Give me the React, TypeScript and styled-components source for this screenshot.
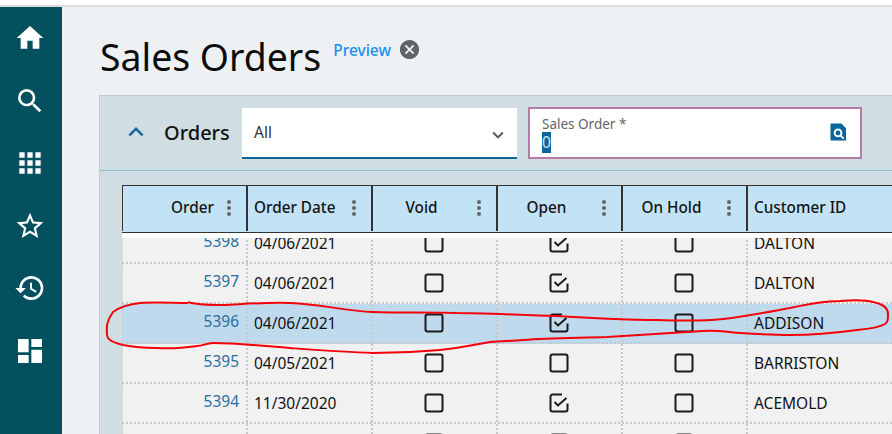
import React from 'react';
import styled, { createGlobalStyle } from 'styled-components';
import {
  MdApps,
  MdCancel,
  MdDashboard,
  MdExpandLess,
  MdExpandMore,
  MdHistory,
  MdHome,
  MdSearch,
  MdStarBorder,
} from 'react-icons/md';

const GlobalStyle = createGlobalStyle`
  html, body {
    margin: 0;
    height: 100%;
    overflow: hidden;
    background: #fff;
    font-family: "Noto Sans", "Open Sans", sans-serif;
    color: #111;
  }
`;

const Page = styled.div`
  position: relative;
  width: 892px;
  height: 434px;
  overflow: hidden;
  display: flex;
  flex-direction: column;
`;

const TopStrip = styled.div`
  height: 5px;
  flex: none;
  background: #fff;
  border-bottom: 2px solid #dcdde1;
`;

const Shell = styled.div`
  flex: 1;
  min-height: 0;
  display: flex;
`;

const Sidebar = styled.nav`
  width: 62px;
  flex: none;
  box-sizing: border-box;
  background: #03505f;
  display: flex;
  flex-direction: column;
  align-items: center;
  gap: 30.5px;
  padding: 15px 2px 0 0;
  color: #fff;

  svg {
    display: block;
  }
`;

const Main = styled.main`
  flex: 1;
  min-width: 0;
  background: #eef1f4;
  padding-left: 37px;
`;

const TitleRow = styled.div`
  height: 88px;
  display: flex;
  align-items: flex-start;
`;

const Title = styled.h1`
  margin: 25px 0 0 1px;
  font-size: 37.4px;
  line-height: 50px;
  font-weight: 400;
  color: #0c0c0c;
`;

const Preview = styled.a`
  margin: 31px 0 0 12px;
  font-size: 15.5px;
  line-height: 24px;
  font-weight: 500;
  color: #1b8eea;
`;

const CloseIcon = styled(MdCancel)`
  margin: 31px 0 0 7px;
  color: #5f6468;
`;

const Panel = styled.section`
  background: #d0dde2;
  border-top: 1px solid #c0ccd1;
  border-left: 1px solid #c0ccd1;
  height: 400px;
`;

const PanelHeader = styled.div`
  height: 75px;
  box-sizing: border-box;
  border-bottom: 1px solid #8fbfcc;
  display: flex;
  align-items: flex-start;
  padding: 12px 0 0 21px;
`;

const Collapse = styled(MdExpandLess)`
  margin-top: 9px;
  color: #17689a;
`;

const PanelTitle = styled.h2`
  margin: 11px 12px 0 13px;
  font-size: 20px;
  line-height: 28px;
  font-weight: 500;
  width: 66px;
  flex: none;
`;

const SelectBox = styled.div`
  width: 275px;
  height: 51px;
  flex: none;
  box-sizing: border-box;
  background: #fff;
  border-bottom: 2px solid #0b6a99;
  display: flex;
  align-items: center;
  justify-content: space-between;
  padding: 0 8px 1px 12px;
  font-size: 15.5px;
  color: #333;

  svg {
    color: #555;
    margin-top: 5px;
  }
`;

const OrderField = styled.div`
  width: 334px;
  height: 52px;
  margin: -1px 0 0 11px;
  flex: none;
  box-sizing: border-box;
  background: #fff;
  border: 2px solid #b57ba0;
  padding: 7px 13px 0 12px;
  display: flex;
  justify-content: space-between;
`;

const FieldText = styled.div`
  display: flex;
  flex-direction: column;
  align-items: flex-start;
`;

const FieldLabel = styled.label`
  font-size: 13.5px;
  line-height: 16px;
  color: #666;
`;

const FieldValue = styled.span`
  background: #0b669b;
  color: #cfe6f2;
  font-size: 15.5px;
  line-height: 21px;
`;

const LookupIcon = styled.svg`
  margin-top: 6px;
`;

const GridWrap = styled.div`
  padding: 14px 0 0 22px;
`;

const columns = '124px 125px 125px 125px 125px 1fr';

const HeaderRow = styled.div`
  display: grid;
  grid-template-columns: ${columns};
  height: 48px;
  box-sizing: border-box;
  background: #c2e3f6;
  border-top: 1px solid #333;
  border-bottom: 1px solid #333;
  margin-right: -4px;
`;

const HeaderCell = styled.div<{ $align: 'left' | 'center' | 'right' }>`
  position: relative;
  box-sizing: border-box;
  border-left: 2px solid #333;
  margin-bottom: 1px;
  display: flex;
  align-items: center;
  font-size: 15.3px;
  font-weight: 500;
  color: #141414;
  padding: 0 32px 4px 6px;
  justify-content: ${(p) =>
    p.$align === 'left' ? 'flex-start' : p.$align === 'center' ? 'center' : 'flex-end'};

  &:first-child {
    border-left-width: 1px;
  }
`;

const Kebab = styled.i`
  position: absolute;
  right: 15px;
  top: 14px;
  display: flex;
  flex-direction: column;
  gap: 2px;

  b {
    width: 4px;
    height: 4px;
    border-radius: 50%;
    background: #666;
  }
`;

const Spacer = styled.div`
  height: 5px;
  background: #fff;
`;

const Body = styled.div`
  height: 240px;
  overflow: hidden;
`;

const Row = styled.div<{ $selected?: boolean; $first?: boolean }>`
  display: grid;
  grid-template-columns: ${columns};
  height: 40px;
  box-sizing: border-box;
  margin-top: ${(p) => (p.$first ? '-14px' : '0')};
  background: ${(p) => (p.$selected ? '#c0daed' : '#f1f1f1')};
  border-bottom: 2px dotted #c8c8c8;
`;

const Cell = styled.div`
  box-sizing: border-box;
  border-left: 2px dotted #c8c8c8;
  display: flex;
  align-items: center;
  font-size: 15.5px;
  padding: 0 6px 1px;
  color: #111;

  &:first-child {
    border-left-width: 1px;
  }
`;

const OrderCell = styled(Cell)`
  justify-content: flex-end;
  padding: 0 7px 5px 0;
  color: #2a6f9f;
`;

const BoxCell = styled(Cell)`
  justify-content: center;
  padding: 0 2px 1px 0;
`;

const Box = styled.svg`
  display: block;
`;

const Scribble = styled.svg`
  position: absolute;
  left: 0;
  top: 0;
  pointer-events: none;
`;

type Order = { id: string; date: string; voided: boolean; open: boolean; hold: boolean; customer: string };

const orders: Order[] = [
  { id: '5398', date: '04/06/2021', voided: false, open: true, hold: false, customer: 'DALTON' },
  { id: '5397', date: '04/06/2021', voided: false, open: true, hold: false, customer: 'DALTON' },
  { id: '5396', date: '04/06/2021', voided: false, open: true, hold: false, customer: 'ADDISON' },
  { id: '5395', date: '04/05/2021', voided: false, open: false, hold: false, customer: 'BARRISTON' },
  { id: '5394', date: '11/30/2020', voided: false, open: true, hold: false, customer: 'ACEMOLD' },
  { id: '', date: '', voided: false, open: false, hold: false, customer: '' },
];

const headers: { label: string; align: 'left' | 'center' | 'right'; menu: boolean }[] = [
  { label: 'Order', align: 'right', menu: true },
  { label: 'Order Date', align: 'left', menu: true },
  { label: 'Void', align: 'center', menu: true },
  { label: 'Open', align: 'center', menu: true },
  { label: 'On Hold', align: 'center', menu: true },
  { label: 'Customer ID', align: 'left', menu: false },
];

const Check: React.FC<{ on: boolean }> = ({ on }) => (
  <Box width="20" height="20" viewBox="0 0 20 20" fill="none" stroke="#1a1a1a" strokeWidth="2">
    {on ? (
      <>
        <path d="M13 1.5H3.5a2 2 0 0 0-2 2v13a2 2 0 0 0 2 2h13a2 2 0 0 0 2-2v-6" />
        <path d="M5.5 9l3.5 3.5L17.5 5" />
      </>
    ) : (
      <rect x="1.5" y="1.5" width="17" height="17" rx="2" />
    )}
  </Box>
);

// hand drawn circle around row 5396, in page coordinates
const scribble =
  'M188 302 C196 305 210 305 223 305 C245 304 268 302 290 303 C320 304 345 311 373 312 ' +
  'C400 313 430 312 457 313 C480 313 520 315 557 316 C590 318 625 320 657 320 ' +
  'C685 321 705 321 723 319 C748 316 768 312 790 308 C808 304 824 301 840 301 ' +
  'C852 300 866 300 873 302 C883 304 888 308 888 314 C888 319 888 322 885 324 ' +
  'C878 328 868 329 857 330 C835 333 812 335 790 335 C772 335 756 334 740 333 ' +
  'C728 332 715 330 703 331 C670 333 640 335 607 337 C580 338 550 338 523 340 ' +
  'C510 341 500 341 490 342 C473 345 458 348 440 350 C418 352 395 353 373 353 ' +
  'C345 352 318 350 290 348 C265 346 238 343 213 343 C206 343 203 346 197 346 ' +
  'C183 348 170 349 157 348 C145 348 133 347 123 345 C115 343 110 341 108 338 ' +
  'C106 334 107 329 107 325 C108 320 110 316 113 312 C120 307 130 304 140 303 ' +
  'C156 302 172 303 188 303';

const App: React.FC = () => (
  <Page>
    <GlobalStyle />
    <TopStrip />
    <Shell>
      <Sidebar>
        <MdHome size={32} />
        <MdSearch size={32} />
        <MdApps size={32} />
        <MdStarBorder size={32} />
        <MdHistory size={32} />
        <MdDashboard size={32} />
      </Sidebar>
      <Main>
        <TitleRow>
          <Title>Sales Orders</Title>
          <Preview>Preview</Preview>
          <CloseIcon size={23} />
        </TitleRow>
        <Panel>
          <PanelHeader>
            <Collapse size={30} />
            <PanelTitle>Orders</PanelTitle>
            <SelectBox>
              All
              <MdExpandMore size={22} />
            </SelectBox>
            <OrderField>
              <FieldText>
                <FieldLabel>Sales Order *</FieldLabel>
                <FieldValue>0</FieldValue>
              </FieldText>
              <LookupIcon width="17" height="20" viewBox="0 0 18 20">
                <path d="M1.5 1H12l5 5v13H1.5a1 1 0 0 1-1-1V2a1 1 0 0 1 1-1z" fill="#0b669b" />
                <circle cx="8.5" cy="11" r="3.6" fill="none" stroke="#fff" strokeWidth="2" />
                <path d="M11 13.5l3.5 3.5" stroke="#fff" strokeWidth="2" />
              </LookupIcon>
            </OrderField>
          </PanelHeader>
          <GridWrap>
            <HeaderRow>
              {headers.map((h) => (
                <HeaderCell key={h.label} $align={h.align}>
                  {h.label}
                  {h.menu && (
                    <Kebab>
                      <b />
                      <b />
                      <b />
                    </Kebab>
                  )}
                </HeaderCell>
              ))}
            </HeaderRow>
            <Spacer />
            <Body>
              {orders.map((o, i) => (
                <Row key={i} $first={i === 0} $selected={o.id === '5396'}>
                  <OrderCell>{o.id}</OrderCell>
                  <Cell>{o.date}</Cell>
                  <BoxCell>
                    <Check on={o.voided} />
                  </BoxCell>
                  <BoxCell>
                    <Check on={o.open} />
                  </BoxCell>
                  <BoxCell>
                    <Check on={o.hold} />
                  </BoxCell>
                  <Cell>{o.customer}</Cell>
                </Row>
              ))}
            </Body>
          </GridWrap>
        </Panel>
      </Main>
    </Shell>
    <Scribble width="892" height="434" viewBox="0 0 892 434" fill="none">
      <path d={scribble} stroke="#f5000a" strokeWidth="2" />
    </Scribble>
  </Page>
);

export default App;
